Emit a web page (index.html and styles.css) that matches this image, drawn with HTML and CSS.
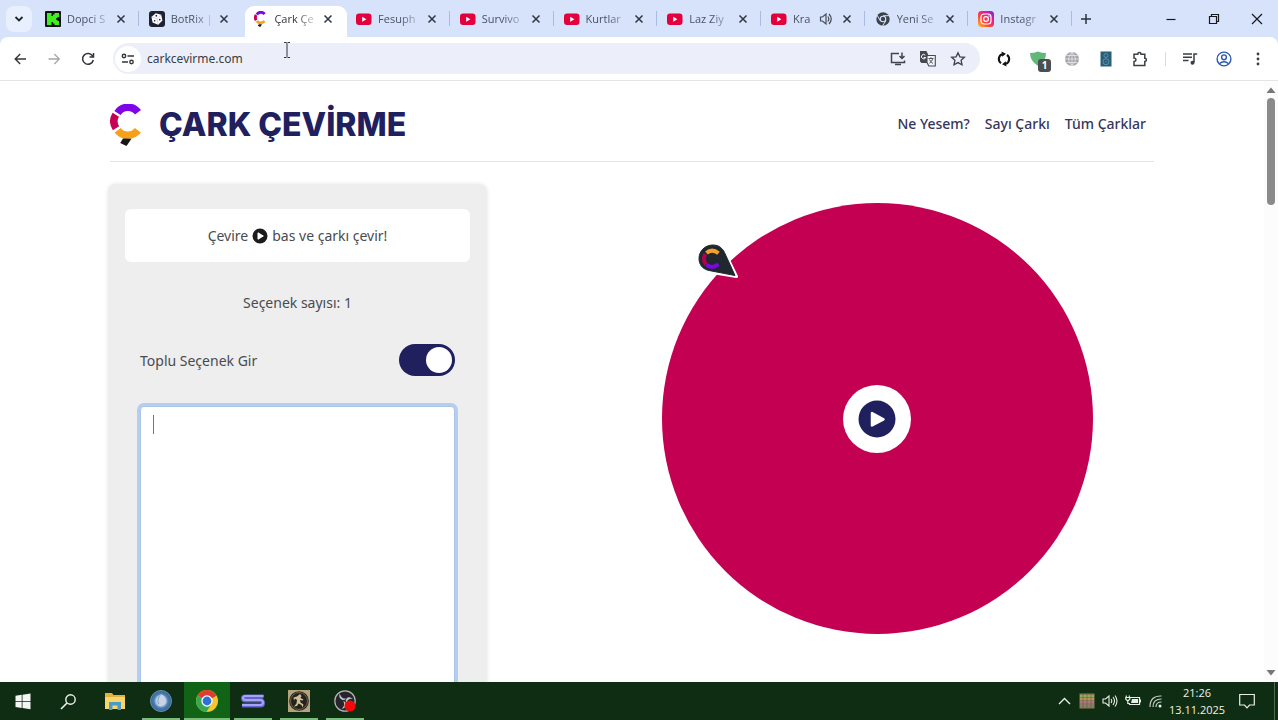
FILE: index.html
```
<!DOCTYPE html>
<html lang="tr">
<head>
<meta charset="utf-8">
<meta name="viewport" content="width=device-width, initial-scale=1">
<title>Çark Çevirme</title>
<link rel="stylesheet" href="styles.css">
</head>
<body>
<svg class="defs" aria-hidden="true">
  <defs>
    <linearGradient id="ig" x1="0" y1="1" x2="1" y2="0"><stop offset="0" stop-color="#ffc22e"/><stop offset=".35" stop-color="#fa4b37"/><stop offset=".65" stop-color="#e51f8c"/><stop offset="1" stop-color="#6a2be0"/></linearGradient>
    <radialGradient id="orb"><stop offset="0" stop-color="#c6d6ea"/><stop offset=".5" stop-color="#a5bdd9"/><stop offset=".65" stop-color="#4d82b5"/><stop offset="1" stop-color="#316392"/></radialGradient>
    <symbol id="x" viewBox="0 0 16 16"><path d="M4.500 4.500l7 7m0-7l-7 7" stroke="currentColor" stroke-width="1.500" fill="none"/></symbol>
    <symbol id="yt" viewBox="0 0 16 16"><rect x="0" y="2.500" width="15.500" height="11.500" rx="3" fill="#e4003c"/><path d="M6.200 5.700v5l4.200-2.500z" fill="#fff"/></symbol>
    <symbol id="cmark" viewBox="0 0 32 42"><g fill="none" stroke-width="7.500"><path d="M7.500 9A12.500 12.500 0 0 1 28 8.300" stroke="#7d05e8"/><path d="M5.800 10.800A12.500 12.500 0 0 0 6 24.200" stroke="#c60055"/><path d="M7.700 26.200A12.500 12.500 0 0 0 27.800 26.300" stroke="#f6a11a"/></g><path d="M13 34.500l8.500.3-5 7.200-6.300-3z" fill="#171717"/></symbol>
  </defs>
</svg>

<header class="browser">
  <div class="tabstrip">
    <button class="tabsearch" aria-label="Sekmelerde ara"><svg width="12" height="12" viewBox="0 0 12 12"><path d="M2.500 4l3.500 3.500L9.500 4" fill="none" stroke="#20242c" stroke-width="1.800"/></svg></button>
    <div class="tabs" role="tablist">
      <div class="tab"><svg class="fav" viewBox="0 0 16 16"><rect width="16" height="16" rx="1" fill="#111"/><path d="M2 2h4.500v3H8V3.500h1.500V2H14v4h-1.500v1.200H11v1.600h1.500V10H14v4H9.500v-1.500H8V11H6.500v3H2z" fill="#3df01e"/></svg><span class="tt">Dopci S</span><button class="close" aria-label="Kapat"><svg><use href="#x"/></svg></button></div>
      <div class="tab nosep"><svg class="fav" viewBox="0 0 16 16"><rect width="16" height="16" rx="3" fill="#1c2135"/><g transform="rotate(-12 8 8)"><path d="M8 2l5 2.800v5.700l-5 3.300-5-3.300V4.800z" fill="#fff"/><path d="M3 4.800L8 7.500l5-2.700M8 7.500v6.300" stroke="#aeb3c1" stroke-width=".5" fill="none"/><circle cx="8" cy="4.700" r=".9" fill="#1c2135"/><circle cx="5.400" cy="9.200" r=".8" fill="#1c2135"/><circle cx="10.600" cy="9.200" r=".8" fill="#1c2135"/></g></svg><span class="tt">BotRix |</span><button class="close" aria-label="Kapat"><svg><use href="#x"/></svg></button></div>
      <div class="tab active nosep"><svg class="fav" viewBox="0 0 32 42"><use href="#cmark"/></svg><span class="tt">Çark Çe</span><button class="close" aria-label="Kapat"><svg><use href="#x"/></svg></button></div>
      <div class="tab"><svg class="fav"><use href="#yt"/></svg><span class="tt">Fesuph</span><button class="close" aria-label="Kapat"><svg><use href="#x"/></svg></button></div>
      <div class="tab"><svg class="fav"><use href="#yt"/></svg><span class="tt">Survivo</span><button class="close" aria-label="Kapat"><svg><use href="#x"/></svg></button></div>
      <div class="tab"><svg class="fav"><use href="#yt"/></svg><span class="tt">Kurtlar</span><button class="close" aria-label="Kapat"><svg><use href="#x"/></svg></button></div>
      <div class="tab"><svg class="fav"><use href="#yt"/></svg><span class="tt">Laz Ziy</span><button class="close" aria-label="Kapat"><svg><use href="#x"/></svg></button></div>
      <div class="tab"><svg class="fav"><use href="#yt"/></svg><span class="tt">Kra</span><svg class="sound" viewBox="0 0 14 14"><path d="M1.500 5v4h2l3.500 3V2L3.500 5z" fill="none" stroke="#454c5c" stroke-width="1.200"/><path d="M8.800 4.500q2 2.500 0 5M10 2q4.500 5 0 10" fill="none" stroke="#454c5c" stroke-width="1.200"/></svg><button class="close" aria-label="Kapat"><svg><use href="#x"/></svg></button></div>
      <div class="tab"><svg class="fav" viewBox="0 0 16 16"><circle cx="8" cy="8" r="6.700" fill="#3c424c"/><path d="M8 4.700h6.500M5.100 9.600L2 4M10.900 9.600L7.500 15" stroke="#d7e3fb" stroke-width="1"/><circle cx="8" cy="8" r="3.300" fill="#d7e3fb"/><circle cx="8" cy="8" r="2.200" fill="#3c424c"/></svg><span class="tt">Yeni Se</span><button class="close" aria-label="Kapat"><svg><use href="#x"/></svg></button></div>
      <div class="tab"><svg class="fav" viewBox="0 0 16 16"><rect width="16" height="16" rx="3.500" fill="url(#ig)"/><rect x="3" y="3" width="10" height="10" rx="3" fill="none" stroke="#fff" stroke-width="1.200"/><circle cx="8" cy="8" r="2.400" fill="none" stroke="#fff" stroke-width="1.200"/><circle cx="11" cy="5" r=".7" fill="#fff"/></svg><span class="tt">Instagr</span><button class="close" aria-label="Kapat"><svg><use href="#x"/></svg></button></div>
    </div>
    <button class="newtab" aria-label="Yeni sekme"><svg width="12" height="12" viewBox="0 0 12 12"><path d="M6 1v10M1 6h10" stroke="#2c3240" stroke-width="1.500"/></svg></button>
    <div class="winctl">
      <button aria-label="Simge durumuna küçült"><svg width="12" height="12" viewBox="0 0 12 12"><path d="M1.500 6.500h9" stroke="#16181d" stroke-width="1.200"/></svg></button>
      <button aria-label="Önceki boyut"><svg width="12" height="12" viewBox="0 0 12 12"><path d="M1.500 3.500h7v7h-7zM3.500 3.500v-2h7v7h-2" fill="none" stroke="#16181d" stroke-width="1.200"/></svg></button>
      <button aria-label="Pencereyi kapat"><svg width="12" height="12" viewBox="0 0 12 12"><path d="M1 1l10 10M11 1L1 11" stroke="#16181d" stroke-width="1.200"/></svg></button>
    </div>
  </div>
  <div class="toolbar">
    <button class="tool" aria-label="Geri"><svg viewBox="0 0 16 16"><path d="M14 8H3.500M8.200 3L3.200 8l5 5" fill="none" stroke="#33363b" stroke-width="1.400"/></svg></button>
    <button class="tool" aria-label="İleri"><svg viewBox="0 0 16 16"><path d="M2.500 8H13M8.300 3l5 5-5 5" fill="none" stroke="#a5a7ab" stroke-width="1.300"/></svg></button>
    <button class="tool" aria-label="Yenile"><svg viewBox="0 0 16 16"><path d="M12.700 5.200A5.400 5.400 0 1 0 13.300 9M13.500 2v4h-4" fill="none" stroke="#33363b" stroke-width="1.500"/></svg></button>
    <div class="omnibox">
      <button class="site" aria-label="Site bilgileri"><svg width="14" height="14" viewBox="0 0 14 14"><path d="M1 10h6M6.500 4H13" stroke="#33363b" stroke-width="1.500"/><circle cx="3" cy="4" r="1.700" fill="none" stroke="#33363b" stroke-width="1.400"/><circle cx="10.500" cy="10" r="1.700" fill="none" stroke="#33363b" stroke-width="1.400"/></svg></button>
      <input class="url" type="text" value="carkcevirme.com" aria-label="Adres çubuğu">
      <button class="omni" aria-label="Uygulamayı yükle"><svg viewBox="0 0 16 16"><path d="M9 2.500H1.500v9h13V9.500M5 13.500h6M12 1.500v6M9.500 5L12 7.500 14.500 5" fill="none" stroke="#41454d" stroke-width="1.500"/></svg></button>
      <button class="omni" aria-label="Çevir"><svg viewBox="0 0 16 16"><path d="M0 0h6.500l1.800 4H11v8H1.500L0 10.500z" fill="#454a52"/><path d="M5.300 4.200A2.200 2.200 0 1 0 5.700 6.500H3.700" fill="none" stroke="#fff" stroke-width="1"/><path d="M7 4.500h8.300V15H8.800L7 11.500z" fill="#f2f3f9" stroke="#454a52" stroke-width="1.100"/><path d="M8.500 7.500h5M11 6.300v1.200M12.800 7.500q-.6 3-3.500 4.800M9.500 8.500q1 2.500 3.500 4" fill="none" stroke="#454a52" stroke-width=".9"/></svg></button>
      <button class="omni" aria-label="Yer işareti ekle"><svg viewBox="0 0 16 16"><path d="M8 1.700l1.900 4.100 4.500.5-3.300 3 .9 4.500L8 11.600l-4 2.200.9-4.500-3.300-3 4.500-.5z" fill="none" stroke="#3c4047" stroke-width="1.300"/></svg></button>
    </div>
    <button class="tool first" aria-label="Uzantı"><svg viewBox="0 0 16 16"><path d="M5 12.200A5.200 5.200 0 0 1 6 3.200M11 3.800a5.200 5.200 0 0 1-1 9" fill="none" stroke="#141414" stroke-width="2.100"/><path d="M5.500.500l4.500 2.300-3.800 3zM10.500 15.500L6 13.200l3.800-3z" fill="#141414"/></svg></button>
    <button class="tool shield" aria-label="Reklam engelleyici, 1"><svg viewBox="0 0 16 16"><path d="M8 .500Q12 2 16 2q0 9-8 13Q0 10 0 2q4 0 8-1.500" fill="#62b878"/></svg><span class="badge">1</span></button>
    <button class="tool" aria-label="Küre"><svg viewBox="0 0 16 16"><circle cx="8" cy="8" r="7" fill="#a2a4a7"/><path d="M1 8h14M2.500 4.500h11M2.500 11.500h11M8 1v14M8 1q-7 7 0 14M8 1q7 7 0 14" fill="none" stroke="#e8e9ec" stroke-width=".8"/></svg></button>
    <button class="tool" aria-label="Ses"><svg viewBox="0 0 16 16"><rect x="2.500" y=".5" width="11" height="15" fill="#285e78"/><circle cx="8" cy="4.500" r="2" fill="none" stroke="#5b93a9"/><circle cx="8" cy="10.700" r="3" fill="none" stroke="#5b93a9"/><circle cx="8" cy="10.700" r=".8" fill="#5b93a9"/></svg></button>
    <button class="tool" aria-label="Uzantılar"><svg viewBox="0 0 16 16"><path d="M2 3.200h3.800a1.600 1.600 0 0 1 3.200 0h3.800v4a1.600 1.600 0 0 1 0 3.200v4H2v-3.800q2-.4 2-1.900T2 7z" fill="none" stroke="#3a3e45" stroke-width="1.500"/></svg></button>
    <span class="divider"></span>
    <button class="tool" aria-label="Medya"><svg viewBox="0 0 16 16"><path d="M1 3h9M1 6.300h9M1 9.600h5.500M12 11.500V3h3.200" fill="none" stroke="#3a3e45" stroke-width="1.500"/><circle cx="10.500" cy="11.700" r="2" fill="#3a3e45"/></svg></button>
    <button class="tool" aria-label="Profil"><svg viewBox="0 0 16 16"><g fill="none" stroke="#2b57b4" stroke-width="1.400"><circle cx="8" cy="8" r="6.900"/><circle cx="8" cy="6.300" r="2.400"/><path d="M3.300 12.700q4.700-4 9.400 0"/></g></svg></button>
    <button class="tool" aria-label="Menü"><svg viewBox="0 0 16 16" fill="#3a3e45"><circle cx="8" cy="3" r="1.400"/><circle cx="8" cy="8" r="1.400"/><circle cx="8" cy="13" r="1.400"/></svg></button>
  </div>
  <svg class="pointer" viewBox="0 0 8 16"><path d="M1 .5h2.200l.8.8.8-.8H7M1 15.500h2.200l.8-.8.8.8H7M4 1.500v13" fill="none" stroke="#333" stroke-width="1"/></svg>
</header>

<div class="viewport">
  <div class="page">
    <div class="sitehead">
      <a class="brand" href="#"><svg viewBox="0 0 32 42"><use href="#cmark"/></svg><span>ÇARK ÇEVİRME</span></a>
      <nav class="nav"><a href="#">Ne Yesem?</a><a href="#">Sayı Çarkı</a><a href="#">Tüm Çarklar</a></nav>
    </div>
    <main class="main">
      <section class="card">
        <p class="hint">Çevire <svg viewBox="0 0 16 16"><circle cx="8" cy="8" r="7.500" fill="#1c1c1f"/><path d="M6 4.800v6.400L11.300 8z" fill="#fff" stroke="#fff" stroke-linejoin="round"/></svg> bas ve çarkı çevir!</p>
        <p class="count">Seçenek sayısı: 1</p>
        <div class="row"><label for="bulk">Toplu Seçenek Gir</label><input class="switch" id="bulk" type="checkbox" checked></div>
        <div class="field"><textarea aria-label="Seçenekler"></textarea><span class="caret"></span></div>
      </section>
      <section class="stage">
        <div class="wheel">
          <button class="spin" aria-label="Çevir"><svg viewBox="0 0 38 38"><circle cx="19" cy="19" r="18.500" fill="#20205f"/><path d="M14 13v12.500l11.500-6.200z" fill="#fff" stroke="#fff" stroke-width="2.500" stroke-linejoin="round"/></svg></button>
          <svg class="needle" viewBox="0 0 44 40"><path d="M17 3C23 3 27 6.500 29 10.500L40.500 34.500 13 30C6 28.500 2 23.500 2 17 2.500 9 9 3 17 3z" fill="#fff" stroke="#fff" stroke-width="3" stroke-linejoin="round"/><path d="M17 3C23 3 26.500 6.500 28.500 10.500L39 33.500 13 28.500C6 27 3 22 3 16.500 3 9 9 3 17 3z" fill="#20272e" stroke="#20272e" stroke-linejoin="round"/><g fill="none" stroke-width="4"><path d="M10.500 11q5.500-5 12 .3" stroke="#f3a029"/><path d="M9.500 12q-3.500 5 .5 10.500" stroke="#b40050"/><path d="M10.500 22.500q5.500 5 12-.2" stroke="#7d05e8"/></g></svg>
        </div>
      </section>
    </main>
  </div>
  <div class="scroll"><svg viewBox="0 0 10 6"><path d="M5 .5L9.500 6h-9z" fill="#777"/></svg><span class="thumb"></span><svg viewBox="0 0 10 6"><path d="M5 5.500L9.500 0h-9z" fill="#777"/></svg></div>
</div>

<footer class="taskbar">
  <button class="app" aria-label="Başlat"><svg viewBox="0 0 20 20"><path d="M2.500 4.700l6.200-.9v6.200H2.500zM9.500 3.700l8-1.200V10h-8zM2.500 10.800h6.200V17l-6.200-.9zM9.500 10.800h8v7.500l-8-1.200z" fill="#f4f6f4"/></svg></button>
  <button class="app" aria-label="Ara"><svg viewBox="0 0 20 20"><circle cx="11.500" cy="8.500" r="4.700" fill="none" stroke="#eef2ee" stroke-width="1.400"/><path d="M8 12L2 18" stroke="#eef2ee" stroke-width="1.600"/></svg></button>
  <button class="app" aria-label="Dosya Gezgini"><svg viewBox="0 0 20 20"><path d="M0 2h7l1.500 2H20v14H0z" fill="#e3b23d"/><path d="M0 6h20v12H0z" fill="#f7d66c"/><path d="M4 11h12v8h-3.500v-4.500h-5V19H4z" fill="#4b9cc4"/></svg></button>
  <button class="app open" aria-label="Uygulama"><svg class="big" viewBox="0 0 22 22"><circle cx="11" cy="11" r="10.500" fill="url(#orb)" stroke="#6b91ae"/><path d="M11 4q-7 4-3.500 10 4 5 8-1Q17 7 11 4" fill="#c9d3e5"/><path d="M11 4q-5 6-2 10" fill="none" stroke="#7c9ec2"/></svg></button>
  <button class="app open current" aria-label="Chrome"><svg class="big" viewBox="0 0 22 22"><circle cx="11" cy="11" r="11" fill="#f5c62d"/><path d="M11 11L1.500 5.500A11 11 0 0 1 20.500 5.500z" fill="#dd3d32"/><path d="M1.500 5.500A11 11 0 0 0 10.500 22l5.200-8.500L11 11z" fill="#36a852"/><path d="M11 5.500h9.500L11 11z" fill="#dd3d32"/><circle cx="11" cy="11" r="5.700" fill="#fff"/><circle cx="11" cy="11" r="4.400" fill="#2d6fdb"/></svg></button>
  <button class="app open" aria-label="Uygulama"><svg class="wide" viewBox="0 0 24 16"><path d="M22.500 3.500H4.500Q2 3.500 2 5.500t2.500 2h15q2.500 0 2.500 2.500t-2.500 2.500H1" fill="none" stroke="#6663cf" stroke-width="4"/><path d="M22.500 3H4.500Q2 3 2 5t2.500 2h15q2.500 0 2.500 2.500T19.500 12H1" fill="none" stroke="#a3a4f3" stroke-width="2"/></svg></button>
  <button class="app open" aria-label="Oyun"><svg class="big" viewBox="0 0 22 22"><rect width="22" height="22" fill="#b3a37f"/><circle cx="11" cy="11" r="9.800" fill="#25221b"/><circle cx="11" cy="11" r="8.500" fill="none" stroke="#857756" stroke-width=".8"/><path d="M12 4l1.500 2-1 2 3 1.500-1 1-2.500-.5.5 2.500 3 2-1 3-1-2.500-3-1.500-1.500 2.500-3 .5 2.500-3 .5-3.500-2-1.500-1 2-.5-3 3.500-1z" fill="#cdbf98"/></svg></button>
  <button class="app open" aria-label="OBS"><svg class="big" viewBox="0 0 22 22"><circle cx="11" cy="11" r="10.200" fill="#26252b" stroke="#b6b6ba" stroke-width="1.200"/><g fill="#c4c4c9"><path d="M5.500 3.500q-1 5 3 6.500 2.500.5 3.500-1.500-3 .5-4.500-1.500-1-1.500-2-3.500"/><path d="M19 9q-4-3-6.500-.5-1.500 2 0 4 1-3 3-3.500 2-.5 3.500 0"/><path d="M7.500 19q5-1 4.500-5.500-.5-2-2.800-2.500 1.500 2.500.8 4.500-1 2-2.500 3.500"/></g><circle cx="16" cy="16" r="5.500" fill="#f00a0a"/></svg></button>
  <div class="tray">
    <button aria-label="Gizli simgeler"><svg viewBox="0 0 16 16"><path d="M3 11l5.500-5.500L14 11" fill="none" stroke="#e8eee8" stroke-width="1.400"/></svg></button>
    <button aria-label="Donanım"><svg viewBox="0 0 16 16"><rect x=".5" y=".5" width="15" height="15" fill="#8b7d55"/><path d="M1 3h14" stroke="#8fbf5b" stroke-width="1.500"/><path d="M1 6h14" stroke="#cf9a5c" stroke-width="1.500"/><path d="M1 9h14" stroke="#c36f92" stroke-width="1.500"/><path d="M1 12.500h14" stroke="#9b6c9c" stroke-width="1.500"/><path d="M4 1v14M8 1v14M12 1v14" stroke="#5d5e45" stroke-width=".6"/></svg></button>
    <button aria-label="Ses düzeyi"><svg viewBox="0 0 16 16"><path d="M1 6v4h2.500L7 13V3L3.500 6zM9 6q1.500 2 0 4M11 4q3 4 0 8M13 2.500q4 5.500 0 11" fill="none" stroke="#e8eee8" stroke-width="1.100"/></svg></button>
    <button aria-label="Pil"><svg viewBox="0 0 16 16"><path d="M5 4.500h9.500v7H4.500v-1" fill="none" stroke="#e8eee8" stroke-width="1.200"/><path d="M7 6h6v4H6z" fill="#e8eee8"/><path d="M1.300 2.500v2M4.300 2.500v2M.8 4.500h4v1.700L2.800 8 .8 6.200zM2.800 8v2.500h2" fill="none" stroke="#e8eee8" stroke-width="1.200"/><path d="M15.500 6.500v3" stroke="#e8eee8"/></svg></button>
    <button aria-label="Ağ"><svg viewBox="0 0 16 16"><g fill="none" stroke="#c5cec5" stroke-width="1.200"><path d="M2 14Q2 2.500 13.500 3M5 14q0-8 8.500-8M8 14q0-5 5.500-5"/></g><circle cx="12" cy="13" r="1.500" fill="#eef2ee"/></svg></button>
    <div class="clock"><span>21:26</span><span>13.11.2025</span></div>
    <button class="notif" aria-label="Bildirimler"><svg viewBox="0 0 16 16"><path d="M.700 1.500h14.600v10.500H10.500L8 14.800 5.500 12H.7z" fill="none" stroke="#e8eee8" stroke-width="1.200"/></svg></button>
    <span class="peek"></span>
  </div>
</footer>
</body>
</html>
```
FILE: styles.css
```
* { box-sizing: border-box; }
body {
  margin: 0;
  height: 100vh;
  display: flex;
  flex-direction: column;
  overflow: hidden;
  background: #fff;
  color: #484b50;
  font-family: "Noto Sans", "Open Sans", sans-serif;
}
button { border: 0; padding: 0; background: none; display: grid; place-items: center; font: inherit; }
p { margin: 0; }
a { color: inherit; text-decoration: none; }
.defs { position: absolute; width: 0; height: 0; }

/* Browser frame */
.browser { position: relative; background: #d7e3fb; }
.tabstrip { height: 37px; display: flex; align-items: center; }
.tabsearch { flex: none; width: 26px; height: 26px; margin-left: 6px; border-radius: 8px; background: #e9f0fd; }
.tabs { flex: 0 1 1037px; min-width: 0; height: 100%; display: flex; margin-left: 4px; }
.tab { flex: 1 1 0; min-width: 0; height: 100%; display: flex; align-items: center; padding: 0 11px 0 9px; position: relative; font-family: "Open Sans", sans-serif; font-size: 11px; color: #4a5162; }
.tab::after { content: ""; position: absolute; right: 1px; top: 11px; width: 1px; height: 15px; background: #a9bce0; }
.tab.nosep::after { display: none; }
.tab.active { z-index: 1; color: #33363d; }
.tab.active::before { content: ""; position: absolute; z-index: -1; inset: 6px 0 0 2px; background: #fff; border-radius: 9px 9px 0 0; }
.fav { flex: none; width: 16px; height: 16px; margin-right: 6px; }
.tt { flex: 1; min-width: 0; overflow: hidden; white-space: nowrap; -webkit-mask-image: linear-gradient(90deg, #000 22px, rgba(0, 0, 0, .15) 42px); mask-image: linear-gradient(90deg, #000 22px, rgba(0, 0, 0, .15) 42px); }
.sound { flex: none; width: 14px; height: 14px; margin-left: 4px; }
.close { flex: none; width: 16px; height: 16px; margin-left: 3px; color: #2f3543; }
.close svg { width: 16px; height: 16px; }
.sound + .close { margin-left: 6px; }
.newtab { width: 26px; height: 26px; }
.winctl { display: flex; margin-left: auto; }
.winctl button { width: 43px; height: 37px; }

.toolbar { height: 44px; display: flex; align-items: center; padding: 0 3px; background: #fff; border-bottom: 1px solid #e2e4e8; border-radius: 8px 8px 0 0; }
.tool { flex: none; position: relative; width: 34px; height: 34px; }
.tool svg { width: 16px; height: 16px; }
.tool.first { margin-left: 7px; }
.badge { position: absolute; left: 17px; top: 17px; width: 13px; height: 13px; border-radius: 3px; background: #4c4f52; color: #fff; font-size: 10px; font-weight: 700; line-height: 13px; text-align: center; }
.omnibox { flex: 1; min-width: 0; height: 31px; margin-left: 8px; padding: 0 7px 0 2px; display: flex; align-items: center; border-radius: 16px; background: #eceef9; }
.site { flex: none; width: 26px; height: 26px; border-radius: 50%; background: #fff; }
.url { flex: 1; min-width: 0; border: 0; padding: 0; margin-left: 6px; background: none; outline: 0; font: 12px "Noto Sans", "Open Sans", sans-serif; color: #3a3d44; }
.omni { flex: none; width: 30px; height: 30px; }
.omni svg { width: 16px; height: 16px; }
.divider { width: 1px; height: 14px; margin: 0 7px 0 8px; background: #d3dcef; }
.pointer { position: absolute; left: 283px; top: 42px; width: 8px; height: 16px; }

/* Page */
.viewport { flex: 1; min-height: 0; display: flex; }
.page { flex: 1; min-width: 0; overflow: hidden; }
.sitehead { max-width: 1044px; height: 81px; margin: 0 auto; padding: 6px 8px 0 0; display: flex; align-items: center; justify-content: space-between; border-bottom: 1px solid #e3e3e6; }
.brand { display: flex; align-items: center; gap: 17px; padding-top: 2px; color: #20205f; font: 800 32px/40px Inter, "Open Sans", sans-serif; }
.brand svg { width: 32px; height: 42px; }
.nav { display: flex; gap: 15px; padding-bottom: 2px; font-size: 14px; font-weight: 500; color: #36365a; }
.main { max-width: 1048px; margin: 22px auto 0; display: grid; grid-template-columns: 379px minmax(0, 1fr); column-gap: 111px; }
.card { padding: 25px 17px 40px; border-radius: 8px; background: #eee; box-shadow: 0 0 4px #e4e4e4; font-size: 14px; }
.hint { height: 53px; display: flex; align-items: center; justify-content: center; gap: 4px; border-radius: 6px; background: #fff; }
.hint svg { width: 16px; height: 16px; }
.count { margin-top: 31px; line-height: 20px; text-align: center; }
.row { margin-top: 31px; padding: 0 15px; display: flex; align-items: center; justify-content: space-between; }
.switch { appearance: none; width: 56px; height: 32px; margin: 0; padding: 3px; border-radius: 16px; background: #b8b8c4; display: flex; }
.switch::before { content: ""; width: 26px; height: 26px; border-radius: 50%; background: #fff; }
.switch:checked { justify-content: flex-end; background: #20205f; }
.field { position: relative; margin: 30px 15px 0; }
.field textarea { display: block; width: 100%; height: 360px; padding: 8px 12px; resize: none; border: 1px solid #a9c5eb; border-radius: 4px; outline: 0; box-shadow: 0 0 0 3px #b7cdee; background: #fff; font: inherit; }
.caret { position: absolute; left: 13px; top: 9px; width: 1px; height: 19px; background: #777; }
.stage { padding-top: 19px; }
.wheel { position: relative; width: 100%; max-width: 431px; aspect-ratio: 1; margin: 0 auto; border-radius: 50%; background: #c30052; display: grid; place-items: center; }
.spin { width: 68px; height: 68px; border-radius: 50%; background: #fff; }
.spin svg { width: 38px; height: 38px; }
.needle { position: absolute; left: 8%; top: 9%; width: 44px; height: 40px; }
.scroll { flex: none; width: 14px; padding: 6px 0; display: flex; flex-direction: column; align-items: center; background: #fcfcfc; }
.scroll svg { width: 10px; height: 6px; }
.thumb { width: 8px; height: 107px; margin: 5px 0 auto; border-radius: 4px; background: #8a8a8a; }

/* Taskbar */
.taskbar { flex: none; height: 38px; display: flex; background: #0f2d12; color: #eef2ee; }
.app { flex: none; position: relative; width: 46px; height: 38px; }
.app svg { width: 20px; height: 20px; }
.app .big { width: 22px; height: 22px; }
.app .wide { width: 24px; height: 16px; }
.app.open::after { content: ""; position: absolute; left: 4px; right: 4px; bottom: 0; height: 2px; background: #79bd7a; }
.app.current { background: #116316; }
.app.current::after { left: 0; right: 0; }
.tray { display: flex; align-items: center; margin-left: auto; }
.tray button { width: 23px; height: 38px; }
.tray button svg { width: 16px; height: 16px; }
.clock { width: 60px; display: flex; flex-direction: column; align-items: center; font-family: "Open Sans", sans-serif; font-size: 11px; line-height: 17px; }
.tray .notif { width: 40px; }
.peek { width: 1px; height: 38px; margin: 0 3px 0 7px; background: #4f6a51; }
```
